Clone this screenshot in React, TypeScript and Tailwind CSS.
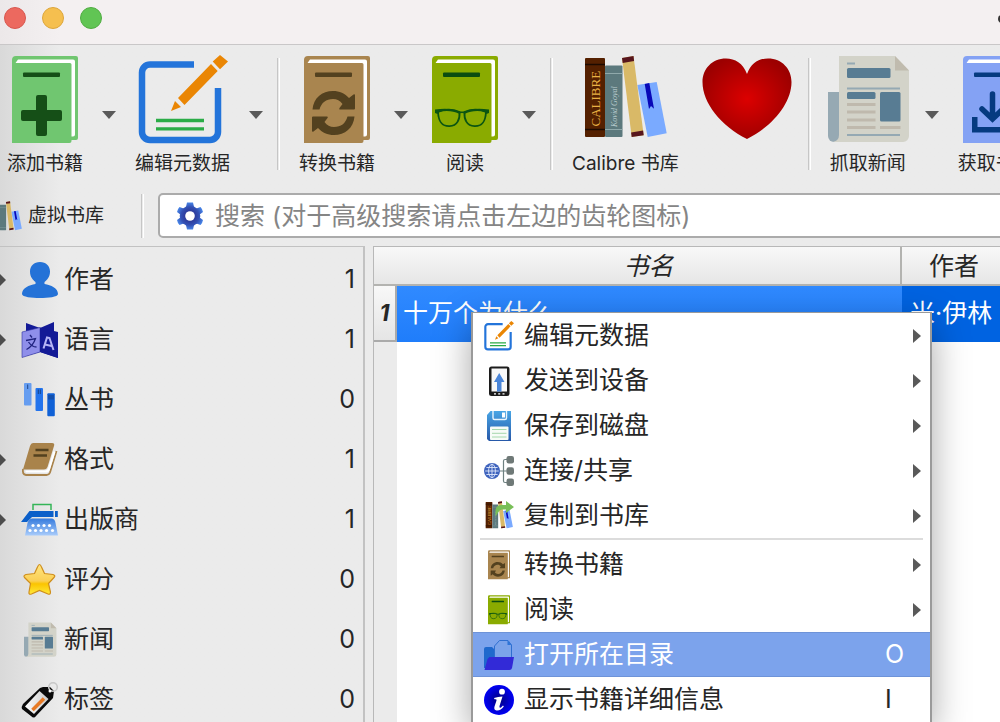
import { ReactNode, useState } from "react";
import clsx from "clsx";

type IconProps = {
  className?: string;
};

type BookIconProps = IconProps & {
  color: string;
  line: string;
  children: ReactNode;
};

const BookIcon = ({ className, color, line, children }: BookIconProps) => (
  <svg viewBox="0 0 90 90" className={className} aria-hidden="true">
    <path
      d="M16 1H76a2 2 0 0 1 2 2V83a2 2 0 0 1-2 2H71.5V86a2 2 0 0 1-2 2H12V5a4 4 0 0 1 4-4Z"
      fill={color}
    />
    <path
      d="M18 4.500H73a2 2 0 0 1 2 2V79.500a2 2 0 0 1-2 2H71.500V9.500a1.500 1.500 0 0 0-1.500-1.500H15.500Z"
      fill="#fff"
    />
    <rect x="23" y="17.500" width="37" height="4.500" rx="1" fill={line} />
    {children}
  </svg>
);

const AddBookIcon = ({ className }: IconProps) => (
  <BookIcon className={className} color="#70c670" line="#154f17">
    <rect x="36" y="40" width="11" height="41" rx="2" fill="#154f17" />
    <rect x="21" y="55" width="41" height="11" rx="2" fill="#154f17" />
  </BookIcon>
);

const ConvertIcon = ({ className }: IconProps) => {
  const arrow =
    "M20.500 54.500C21.500 43 30 36 41 36C47.500 36 53 38.500 57 43L61.500 39.500Q63 38.500 63 40.500V53.500Q63 54.500 62 54.500H48Q46.500 54.500 47.500 53L50.500 49C48 45.500 45 44 41 44C34 44 29.500 47.500 27.500 54.500Z";
  return (
    <BookIcon className={className} color="#a9854f" line="#53411f">
      <path d={arrow} fill="#53411f" />
      <path d={arrow} fill="#53411f" transform="rotate(180 41.500 58)" />
    </BookIcon>
  );
};

const ReadIcon = ({ className }: IconProps) => (
  <BookIcon className={className} color="#8aab00" line="#0b4d10">
    <g fill="none" stroke="#0b5512" strokeWidth="1.800">
      <path d="M18 57C24 53.500 34 54 39.500 57C40 64 37.500 71 29.500 71.200C20.500 71.500 18.500 65 18 57Z" />
      <path d="M66 57C60 53.500 50 54 44.500 57C44 64 46.500 71 54.500 71.200C63.500 71.500 65.500 65 66 57Z" />
    </g>
    <path
      d="M15 54.500C24 53 33 53.500 38 56Q42 57 46 56C51 53.500 60 53 69 54.500V58L66.500 59L65 57C58 55 50 56 45.500 58.500Q42 57.500 38.500 58.500C34 56 26 55 19 57L17.500 59L15 58Z"
      fill="#0b5512"
    />
  </BookIcon>
);

const FetchBookIcon = ({ className }: IconProps) => (
  <BookIcon className={className} color="#84a2f4" line="#053a80">
    <path
      d="M41.500 39V63M31 54L41.500 64L52 54"
      fill="none"
      stroke="#053a80"
      strokeWidth="5.500"
      strokeLinecap="round"
    />
    <path d="M21 62H26.500V72H57V62H62V77.500H21Z" fill="#053a80" />
  </BookIcon>
);

const EditIcon = ({ className }: IconProps) => (
  <svg viewBox="0 0 90 90" className={className} aria-hidden="true">
    <path
      d="M56 9.500H12a8 8 0 0 0-8 8V77a8 8 0 0 0 8 8H72a8 8 0 0 0 8-8V33"
      fill="none"
      stroke="#2374da"
      strokeWidth="6.500"
    />
    <path d="M18 65.500H66M18 73.800H66" stroke="#2bac47" strokeWidth="3.300" />
    <path
      d="M33 56L37 46L43 52ZM40 43L73 9L79.700 16L46.500 50ZM74.700 6.500L82 0L90 6.500L82 14.300Z"
      fill="#ea8604"
    />
  </svg>
);

type LibraryIconProps = IconProps & {
  untitled?: boolean;
};

const LibraryIcon = ({ className, untitled }: LibraryIconProps) => (
  <svg viewBox="0 0 90 90" className={className} aria-hidden="true">
    <rect x="5" y="3" width="20" height="79" rx="1" fill="#542000" />
    <path d="M5 9.500H25M5 74.500H25" stroke="#1c0a00" strokeWidth="1.500" />
    <rect x="25" y="10.500" width="17.500" height="71.500" rx="1" fill="#5c797d" />
    <path d="M25 18.500H42.500M25 74.500H42.500" stroke="#90a9ab" strokeWidth="1" />
    {!untitled && (
      <>
        <text
          transform="translate(19.500 71.500) rotate(-90)"
          fontFamily="Liberation Serif, serif"
          fontSize="13"
          fill="#e9b044"
        >
          CALIBRE
        </text>
        <text
          transform="translate(37 72) rotate(-90)"
          fontFamily="Liberation Serif, serif"
          fontSize="8"
          fontStyle="italic"
          fill="#b9cccd"
        >
          Kovid Goyal
        </text>
      </>
    )}
    <path d="M57.300 30L76.700 27L86.700 78.300L67.700 82Z" fill="#7aaaff" />
    <path d="M64.700 29L69.300 28L74 53.700L71 51L69 54Z" fill="#0808b8" />
    <path d="M42 3L53.500 1L63.700 80.300L51.700 82Z" fill="#d9b967" />
    <path d="M42 3L53.500 1L54.100 6L42.700 8ZM51.100 77.500L63.100 75.500L63.700 80.300L51.700 82Z" fill="#57151d" />
  </svg>
);

const HeartIcon = ({ className }: IconProps) => (
  <svg viewBox="0 0 90 90" className={className} aria-hidden="true">
    <defs>
      <radialGradient id="heart" cx="0.500" cy="0.500" r="0.550">
        <stop offset="0" stopColor="#dc0000" />
        <stop offset="1" stopColor="#9c0000" />
      </radialGradient>
    </defs>
    <path
      d="M46 19C42 8 34 3.500 25 3.500C11 3.500 1.500 14 1.500 27C1.500 48 20 71 46 84C72 71 90.500 48 90.500 27C90.500 14 81 3.500 67 3.500C58 3.500 50 8 46 19Z"
      fill="url(#heart)"
    />
  </svg>
);

const NewsIcon = ({ className }: IconProps) => (
  <svg viewBox="0 0 90 90" className={className} aria-hidden="true">
    <path d="M5 37H17V81a5.500 5.500 0 0 1-12 0Z" fill="#96a9b3" />
    <path d="M16 1H72L86 15.500V81a6 6 0 0 1-6 6H10Q16 85.500 16 80Z" fill="#d3d3c9" />
    <path d="M72 1L86 15.500H72Z" fill="#c0bbae" />
    <path d="M24 8.500H32M24 33.500H77M24 80H77" stroke="#95a9b3" strokeWidth="2" />
    <g fill="#587c93">
      <rect x="24" y="13" width="43.500" height="10" rx="1.500" />
      <rect x="24" y="37" width="28.500" height="7" rx="1.500" />
      <rect x="57" y="37" width="20.500" height="29.500" rx="1.500" />
    </g>
    <path
      d="M24 49.500H52.500M24 57H52.500M24 65H52.500M24 72.500H52.500M57 72.500H77.500"
      stroke="#bfb9ad"
      strokeWidth="3"
    />
  </svg>
);

const GearIcon = ({ className }: IconProps) => (
  <svg viewBox="0 0 28 28" className={className} aria-hidden="true">
    <defs>
      <radialGradient id="gear" gradientUnits="userSpaceOnUse" cx="14" cy="14" r="14">
        <stop offset="0.300" stopColor="#2b3797" />
        <stop offset="0.650" stopColor="#3350b4" />
        <stop offset="1" stopColor="#4a8aec" />
      </radialGradient>
    </defs>
    <g fill="url(#gear)">
      <circle cx="14" cy="14" r="10.300" />
      <path d="M11 0.500H17L18.500 7H9.500ZM9.500 21H18.500L17 27.500H11ZM3.500 5L9 7L5 13L1 10Q1.500 7 3.500 5ZM24.500 5L19 7L23 13L27 10Q26.500 7 24.500 5ZM1 18L5 15L9 21L3.500 23Q1.500 21 1 18ZM27 18L23 15L19 21L24.500 23Q26.500 21 27 18Z" />
    </g>
    <circle cx="14" cy="14" r="4.800" fill="#fff" />
  </svg>
);

const AuthorIcon = ({ className }: IconProps) => (
  <svg viewBox="0 0 36 36" className={className} aria-hidden="true">
    <path
      d="M18 0C24 0 28 4 28 9.500C28 15 25 18 22.500 20V22C29 23 36 26 36 32C36 35 26 36 18 36S0 35 0 32C0 26 7 23 13.500 22V20C11 18 8 15 8 9.500C8 4 12 0 18 0Z"
      fill="#2472d7"
    />
  </svg>
);

const LanguageIcon = ({ className }: IconProps) => (
  <svg viewBox="0 0 36 36" className={className} aria-hidden="true">
    <path d="M4 1L18 6L32 0V10H36V36L18 30L4 34Z" fill="#131a96" />
    <path d="M0 10L18 5.500V30L0 35.500Z" fill="#8f8fea" stroke="#2b2f9d" strokeWidth="0.600" />
    <path d="M18 5.500V30L36 36V10Z" fill="#131a96" />
    <path
      d="M8 13L10 15.500M4 18.500L13.500 16.500Q11 24 4.500 27.500M6.500 20Q10 25 14.500 25"
      fill="none"
      stroke="#20237f"
      strokeWidth="1.300"
    />
    <path d="M21.500 26.500L25 15.500L27.500 16L31.500 28M23 22.500L29.500 24" fill="none" stroke="#b4b4f5" strokeWidth="2" />
  </svg>
);

const SeriesIcon = ({ className }: IconProps) => (
  <svg viewBox="0 0 36 36" className={className} aria-hidden="true">
    <rect x="2" y="1" width="7.500" height="22.500" rx="1" fill="#669df0" />
    <rect x="13.500" y="6" width="7.500" height="23" rx="1" fill="#2374ed" />
    <rect x="25.300" y="11.300" width="7.500" height="23" rx="1" fill="#1061d6" />
    <path d="M5.700 2.500V7M16.300 7.500V12M18.300 7.500V12M27 13V17.500M29 13V17.500M31 13V17.500" stroke="#183d7c" strokeWidth="0.900" />
  </svg>
);

const FormatsIcon = ({ className }: IconProps) => (
  <svg viewBox="0 0 36 36" className={className} aria-hidden="true">
    <path d="M11 1H30Q33 1 32 4L25.500 25Q24.500 27.500 22 27.500H1L8 4Q9 1 11 1Z" fill="#a9834b" />
    <path
      d="M34.500 9L28 30.500Q27 33 24.500 33H4Q0 32.500 1 27"
      fill="none"
      stroke="#a9834b"
      strokeWidth="1.800"
    />
    <path d="M3.500 29.500H23.500Q26 29.500 27 27L32.500 9.500" fill="none" stroke="#fff" strokeWidth="2.200" />
    <path d="M13.500 8H26.500M11.500 13.500H25" stroke="#53411f" strokeWidth="2.300" />
  </svg>
);

const PublisherIcon = ({ className }: IconProps) => (
  <svg viewBox="0 0 36 36" className={className} aria-hidden="true">
    <defs>
      <linearGradient id="keys" x2="0" y2="1">
        <stop offset="0" stopColor="#367bdd" />
        <stop offset="1" stopColor="#a9ccfb" />
      </linearGradient>
    </defs>
    <path d="M11 8V2.500H29V8" fill="none" stroke="#34b557" strokeWidth="1.500" />
    <path d="M-1 20L7.500 9H31.500V15H10L5 20ZM33 9H35.800V15H33Z" fill="#0b5fc9" />
    <path d="M10 16.500H30Q33 17 33.500 21L36 33.500H3L5.500 21Q6.500 17 10 16.500Z" fill="url(#keys)" />
    <g fill="#fff">
      {[11, 16.500, 22, 27.500].map((x) => (
        <circle key={x} cx={x} cy="23.500" r="1.600" />
      ))}
      {[8, 13.500, 19, 24.500, 30.500].map((x) => (
        <circle key={x} cx={x} cy="28.500" r="1.600" />
      ))}
    </g>
  </svg>
);

const RatingIcon = ({ className }: IconProps) => (
  <svg viewBox="0 0 36 36" className={className} aria-hidden="true">
    <defs>
      <linearGradient id="star" x2="0" y2="1">
        <stop offset="0" stopColor="#ffe680" />
        <stop offset="0.550" stopColor="#fbcf55" />
        <stop offset="0.650" stopColor="#fbc400" />
        <stop offset="1" stopColor="#ffe93a" />
      </linearGradient>
    </defs>
    <path
      d="M17.500 2.500Q18.500 2.500 19.500 5L22.500 11.500L31 12.500Q34 13.500 32 15.500L26.500 21.500L28.500 30Q28.500 33 26 32L17.500 28.500L9.500 32Q6.500 33 7 30L8.500 21.500L2.500 15.500Q1 13.500 4 12.500L12.500 11.500L15.500 5Q16.500 2.500 17.500 2.500Z"
      fill="url(#star)"
      stroke="#cf8e1c"
      strokeWidth="1.200"
    />
  </svg>
);

const TagIcon = ({ className }: IconProps) => (
  <svg viewBox="0 0 36 36" className={className} aria-hidden="true">
    <defs>
      <linearGradient id="tag">
        <stop offset="0" stopColor="#fff" />
        <stop offset="1" stopColor="#c9c9c9" />
      </linearGradient>
    </defs>
    <path
      d="M21 5H28L32 9L31 16L14 34Q12 37 9 34L0 27Q-1 25 1 22L18 6Z"
      fill="#0a0a0a"
    />
    <path d="M17.500 9L26.500 17L12 32L3 24.500Z" fill="url(#tag)" />
    <path d="M10.500 28L22 16.500" stroke="#e77a25" strokeWidth="3.500" />
    <circle cx="31" cy="5" r="4.300" fill="none" stroke="#c7c7c7" strokeWidth="1.600" />
    <circle cx="28" cy="9" r="1.500" fill="#fff" />
  </svg>
);

const DeviceIcon = ({ className }: IconProps) => (
  <svg viewBox="0 0 30 30" className={className} aria-hidden="true">
    <rect x="5" y="0.500" width="20.500" height="29.500" rx="2.500" fill="#1c1c1c" />
    <rect x="7.500" y="2.500" width="15.500" height="23" fill="#f8f8f8" />
    <path d="M15.200 7L20.500 16H17.500V25.500H13V16H10Z" fill="#4a85d8" />
    <path d="M10 27.800H12M14.200 27.800H16.200M18.500 27.800H20.500" stroke="#fff" strokeWidth="1.300" />
  </svg>
);

const SaveIcon = ({ className }: IconProps) => (
  <svg viewBox="0 0 30 30" className={className} aria-hidden="true">
    <defs>
      <linearGradient id="floppy" x2="0" y2="1">
        <stop offset="0" stopColor="#48a5e5" />
        <stop offset="1" stopColor="#2758a8" />
      </linearGradient>
    </defs>
    <path d="M3 4L6.500 0H27V30H5L3 28Z" fill="url(#floppy)" />
    <path d="M9 0V7Q9 8.500 10.500 8.500H21Q22.500 8.500 22.500 7V0" fill="none" stroke="#e8f4fc" strokeWidth="1.400" />
    <rect x="18" y="1.500" width="3" height="5" fill="#fff" />
    <rect x="6" y="15.500" width="18.500" height="13.500" rx="1" fill="#f7fbf7" />
    <path d="M8 18.500H22.500M8 22.300H22.500M8 26H22.500" stroke="#a5d8ac" strokeWidth="1" />
  </svg>
);

const ShareIcon = ({ className }: IconProps) => (
  <svg viewBox="0 0 30 30" className={className} aria-hidden="true">
    <path d="M16 15H24M24 3.500H21Q19.500 3.500 19.500 5V25Q19.500 26.500 21 26.500H24" fill="none" stroke="#6d8080" strokeWidth="1.200" />
    <g fill="#6f7977">
      <rect x="22.500" y="0" width="7.500" height="7.500" rx="2.200" />
      <rect x="22.500" y="11.300" width="7.500" height="7.500" rx="2.200" />
      <rect x="22.500" y="22.500" width="7.500" height="7.500" rx="2.200" />
    </g>
    <circle cx="8" cy="15" r="8" fill="#3e63bd" />
    <g fill="none" stroke="#dfe8fa" strokeWidth="0.900">
      <ellipse cx="8" cy="15" rx="3.400" ry="6.800" />
      <path d="M8 8V22M1.200 15H14.800M2.400 11.500H13.600M2.400 18.500H13.600" />
    </g>
  </svg>
);

const CopyIcon = ({ className }: IconProps) => (
  <span className={clsx("relative block", className)}>
    <LibraryIcon className="size-full" />
    <svg viewBox="0 0 30 30" className="absolute inset-0 size-full" aria-hidden="true">
      <path d="M11.500 15.500V10Q11.500 4 18 4H22V0L30 6L22 12V8.500H18Q15.500 8.500 14.500 11Z" fill="#79bf58" />
    </svg>
  </span>
);

const FolderIcon = ({ className }: IconProps) => (
  <svg viewBox="0 0 30 30" className={className} aria-hidden="true">
    <path d="M0 9Q0 7 2 7H8L10 9H13V28H0Z" fill="#1f69cd" />
    <path d="M15.500 0.500H24L27.500 5V22H10.500V6Z" fill="#7ba3ea" stroke="#2e6fd0" strokeWidth="1" />
    <path d="M23.500 0.500V5H27.500Z" fill="#2d74d8" />
    <path d="M5.500 17H30L28 28Q27.500 30 25.500 30H0.500L3.500 19Z" fill="#322ad7" />
  </svg>
);

const InfoIcon = ({ className }: IconProps) => (
  <svg viewBox="0 0 30 30" className={className} aria-hidden="true">
    <defs>
      <radialGradient id="info">
        <stop offset="0" stopColor="#00007c" />
        <stop offset="1" stopColor="#0000f5" />
      </radialGradient>
    </defs>
    <circle cx="15" cy="15" r="15" fill="url(#info)" />
    <circle cx="18" cy="6.700" r="2.900" fill="#fff" />
    <path
      d="M10 13Q14 11.500 18.500 11.500L15.500 21Q15 23.500 17 22.500L19 20.500L19.800 21.500Q16.500 26 12.500 25.500Q9.500 25 10.500 21.500L12.500 15.500Q13 13.800 10.500 14.300Z"
      fill="#fff"
    />
  </svg>
);

const toolbarGroups = [
  [
    { label: "添加书籍", Icon: AddBookIcon, hasMenu: true },
    { label: "编辑元数据", Icon: EditIcon, hasMenu: true }
  ],
  [
    { label: "转换书籍", Icon: ConvertIcon, hasMenu: true },
    { label: "阅读", Icon: ReadIcon, hasMenu: true }
  ],
  [
    { label: "Calibre 书库", Icon: LibraryIcon, hasMenu: false },
    { label: "", Icon: HeartIcon, hasMenu: false }
  ],
  [
    { label: "抓取新闻", Icon: NewsIcon, hasMenu: true },
    { label: "获取书籍", Icon: FetchBookIcon, hasMenu: false }
  ]
];

const categories = [
  { label: "作者", count: 1, Icon: AuthorIcon },
  { label: "语言", count: 1, Icon: LanguageIcon },
  { label: "丛书", count: 0, Icon: SeriesIcon },
  { label: "格式", count: 1, Icon: FormatsIcon },
  { label: "出版商", count: 1, Icon: PublisherIcon },
  { label: "评分", count: 0, Icon: RatingIcon },
  { label: "新闻", count: 0, Icon: NewsIcon },
  { label: "标签", count: 0, Icon: TagIcon }
];

const bookActions = [
  { label: "编辑元数据", Icon: EditIcon },
  { label: "发送到设备", Icon: DeviceIcon },
  { label: "保存到磁盘", Icon: SaveIcon },
  { label: "连接/共享", Icon: ShareIcon },
  { label: "复制到书库", Icon: CopyIcon }
];

const viewActions = [
  { label: "转换书籍", Icon: ConvertIcon },
  { label: "阅读", Icon: ReadIcon },
  { label: "打开所在目录", Icon: FolderIcon, shortcut: "O" },
  { label: "显示书籍详细信息", Icon: InfoIcon, shortcut: "I" }
];

type MenuItemProps = {
  label: string;
  Icon: (props: IconProps) => ReactNode;
  shortcut?: string;
  active: boolean;
  onHover: (label: string) => void;
};

const MenuItem = ({ label, Icon, shortcut, active, onHover }: MenuItemProps) => (
  <button
    type="button"
    role="menuitem"
    onMouseEnter={() => onHover(label)}
    className={clsx(
      "flex h-[45px] w-full items-center gap-[10px] border-y pl-[11px] text-left",
      active
        ? "border-[#6e93d8] bg-[#7ca3ec] text-white"
        : "border-transparent text-[#262626]"
    )}
  >
    <Icon className="size-[30px] shrink-0 overflow-visible" />
    <span className="flex-1 whitespace-nowrap">{label}</span>
    {shortcut ? (
      <span className="w-[45px]">{shortcut}</span>
    ) : (
      <svg viewBox="0 0 8 14" className="mr-[9px] h-[14px] w-2" aria-hidden="true">
        <path d="M0 0L8 7L0 14Z" fill="#595959" />
      </svg>
    )}
  </button>
);

const Separator = () => (
  <div className="mt-[13px] mr-[11px] ml-[3px] h-28 w-[3px] shrink-0 border-r border-l border-r-white border-l-[#c6c6c6]" />
);

const App = () => {
  const [query, setQuery] = useState("");
  const [activeItem, setActiveItem] = useState("打开所在目录");

  return (
    <div className="flex h-screen flex-col overflow-hidden bg-[#ebebeb] bg-linear-to-r from-[#d9d9d9] to-[#ebebeb] to-[60px] font-['Inter','Noto_Sans_CJK_SC',sans-serif] text-[25px] text-[#262626]">
      {/* 窗口标题栏 */}
      <header className="flex h-[45px] shrink-0 items-start justify-between border-b border-[#c9c7c8] bg-linear-to-r from-[#ece8e9] to-[#f4f0f1] to-[60px] pt-[7px] pl-1">
        <div className="flex gap-4">
          <button type="button" aria-label="关闭" className="size-[22px] rounded-full border border-[#d8574f] bg-[#ec695f]" />
          <button type="button" aria-label="最小化" className="size-[22px] rounded-full border border-[#dda63b] bg-[#f5bf4f]" />
          <button type="button" aria-label="缩放" className="size-[22px] rounded-full border border-[#50ad42] bg-[#61c554]" />
        </div>
        <span className="mt-2 -mr-[6px] size-2 rounded-full bg-[#333]" />
      </header>

      {/* 工具栏 */}
      <div className="-ml-px flex shrink-0 text-[19px] leading-6">
        {toolbarGroups.map((group, index) => (
          <div key={index} className="flex shrink-0">
            {index > 0 && <Separator />}
            {group.map(({ label, Icon, hasMenu }) => (
              <div key={label} className="flex shrink-0">
                <button
                  type="button"
                  aria-label={label || "捐赠"}
                  className={clsx(
                    "flex h-[130px] flex-col items-center gap-[7px] px-2 pt-[10px] whitespace-nowrap",
                    label ? "min-w-[92px]" : "w-[118px]"
                  )}
                >
                  <Icon className="-mx-2 size-[90px] shrink-0 overflow-visible" />
                  {label}
                </button>
                {hasMenu && (
                  <button type="button" aria-label={`${label}菜单`} className="flex w-9 justify-center pt-[66px]">
                    <svg viewBox="0 0 14 8" className="h-2 w-[14px]" aria-hidden="true">
                      <path d="M0 0H14L7 8Z" fill="#5a5a5a" />
                    </svg>
                  </button>
                )}
              </div>
            ))}
          </div>
        ))}
      </div>

      {/* 搜索栏 */}
      <div className="flex shrink-0 items-center pt-[18px] pb-2">
        <button type="button" className="-ml-[9px] flex items-center gap-[5px] pt-[2px] text-[19px] whitespace-nowrap">
          <LibraryIcon className="size-8" untitled />
          虚拟书库
        </button>
        <div className="mr-[14px] ml-[37px] h-11 w-[3px] border-r border-l border-r-white border-l-[#c6c6c6]" />
        <div className="-mr-2 flex h-[45px] flex-1 items-center gap-[11px] rounded-[5px] border-2 border-[#ababab] bg-white pl-4">
          <button type="button" aria-label="高级搜索">
            <GearIcon className="size-7" />
          </button>
          <input
            type="text"
            aria-label="搜索"
            value={query}
            onChange={(e) => setQuery(e.target.value)}
            placeholder="搜索 (对于高级搜索请点击左边的齿轮图标)"
            className="min-w-0 flex-1 bg-transparent pt-[2px] placeholder:text-[#858585] focus:outline-none"
          />
        </div>
      </div>

      <main className="flex min-h-0 flex-1 gap-2">
        {/* 分类列表 */}
        <nav className="w-[365px] shrink-0 border-t border-r-2 border-[#c2c2c2] pt-[3px]">
          {categories.map(({ label, count, Icon }) => (
            <button
              key={label}
              type="button"
              className="flex h-[60px] w-full items-center pr-2 text-left"
            >
              <span className="w-[22px]">
                {count > 0 && (
                  <svg viewBox="0 0 6 14" className="h-[14px] w-[6px]" aria-hidden="true">
                    <path d="M0 1L6 7L0 13Z" fill="#4d4d4d" />
                  </svg>
                )}
              </span>
              <Icon className="mr-[6px] size-9 overflow-visible" />
              <span className="flex-1">{label}</span>
              <span>{count}</span>
            </button>
          ))}
        </nav>

        {/* 书籍列表 */}
        <section className="relative -mr-[6px] min-w-0 flex-1 border-t border-l border-[#b8b8b8] bg-[linear-gradient(90deg,#ebebeb_23px,#fff_23px)]">
          <table className="w-full table-fixed border-separate border-spacing-0">
            <colgroup>
              <col className="w-[23px]" />
              <col className="w-[505px]" />
              <col />
            </colgroup>
            <thead>
              <tr className="h-[39px] bg-linear-to-b from-[#f8f8f8] to-[#e5e5e5] leading-9">
                <td className="border-b-2 border-[#b3b3b0]" />
                <th className="border-r-2 border-b-2 border-[#b3b3b0] pt-px font-normal italic">书名</th>
                <th className="border-b-2 border-[#b3b3b0] pt-px font-normal">作者</th>
              </tr>
            </thead>
            <tbody>
              <tr className="h-14">
                <th className="border-r-2 border-b-2 border-[#aaa] bg-linear-to-b from-[#f8f8f8] to-[#e5e5e5] text-center text-[23px] italic">
                  1
                </th>
                <td className="bg-linear-to-b from-[#308aff] to-[#1f7dfb] pl-[6px] whitespace-nowrap text-white">
                  十万个为什么
                </td>
                <td className="bg-[#0063e1] pl-2 whitespace-nowrap text-white">米·伊林</td>
              </tr>
            </tbody>
          </table>

          {/* 右键菜单 */}
          <div
            role="menu"
            className="absolute top-[65px] left-[97px] w-[461px] border-x-2 border-t border-[#9a9a9a] bg-white shadow-[0_12px_34px_rgba(0,0,0,0.35)]"
          >
            {bookActions.map((item) => (
              <MenuItem key={item.label} {...item} active={activeItem === item.label} onHover={setActiveItem} />
            ))}
            <div className="mx-[7px] mb-[2px] h-[2px] bg-[#dcdcdc]" />
            {viewActions.map((item) => (
              <MenuItem key={item.label} {...item} active={activeItem === item.label} onHover={setActiveItem} />
            ))}
          </div>
        </section>
      </main>
    </div>
  );
};

export default App;
